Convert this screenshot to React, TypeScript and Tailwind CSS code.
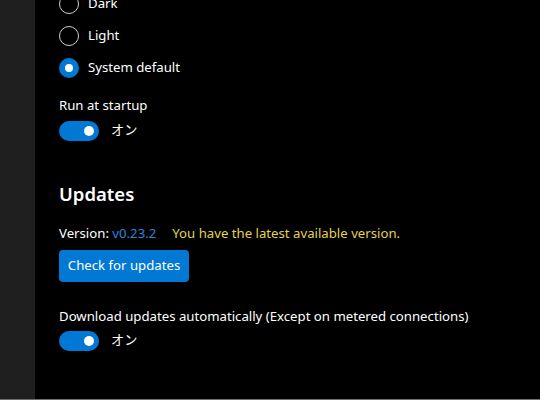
const font = { fontFamily: '"Noto Sans", "Noto Sans CJK JP", sans-serif' };

function Radio({ label, checked }: { label: string; checked?: boolean }) {
  return (
    <label className="flex h-8 items-center gap-[9px]">
      {checked ? (
        <span className="flex h-5 w-5 items-center justify-center rounded-full bg-[#0078d4]">
          <span className="h-2 w-2 rounded-full bg-white" />
        </span>
      ) : (
        <span className="h-5 w-5 rounded-full border border-[#d0d0d0]" />
      )}
      <span className="text-[13.2px] text-white">{label}</span>
    </label>
  );
}

function Toggle({ label }: { label: string }) {
  return (
    <div className="flex h-5 items-center gap-3">
      <span className="flex h-5 w-10 items-center justify-end rounded-full bg-[#0078d4] pr-[5px]">
        <span className="h-2.5 w-2.5 rounded-full bg-white" />
      </span>
      <span className="text-[13.2px] text-white">{label}</span>
    </div>
  );
}

export default function App() {
  return (
    <div className="flex h-[400px] w-[540px] overflow-hidden border-b border-[#6e6e6e] bg-black" style={font}>
      <div className="w-[35px] shrink-0 bg-[#1f1f1f]" />
      <div className="flex-1 pl-6 -mt-3">
        <div className="flex flex-col">
          <Radio label="Dark" />
          <Radio label="Light" />
          <Radio label="System default" checked />
        </div>

        <p className="mt-[11px] text-[13.2px] leading-5 text-white">Run at startup</p>
        <div className="mt-1.5">
          <Toggle label="オン" />
        </div>

        <h2 className="mt-[39px] text-[18.5px] font-semibold leading-7 text-white">Updates</h2>
        <p className="mt-[15px] flex gap-4 text-[13.2px] leading-5">
          <span className="text-white">
            Version: <span className="text-[#2b88d8]">v0.23.2</span>
          </span>
          <span className="text-[#e3d34f]">You have the latest available version.</span>
        </p>
        <button className="mt-[7px] h-8 w-[130px] rounded-sm bg-[#0078d4] text-[13.2px] text-white">
          Check for updates
        </button>

        <p className="mt-6 text-[13.2px] leading-5 text-white">
          Download updates automatically (Except on metered connections)
        </p>
        <div className="mt-[5px]">
          <Toggle label="オン" />
        </div>
      </div>
    </div>
  );
}
